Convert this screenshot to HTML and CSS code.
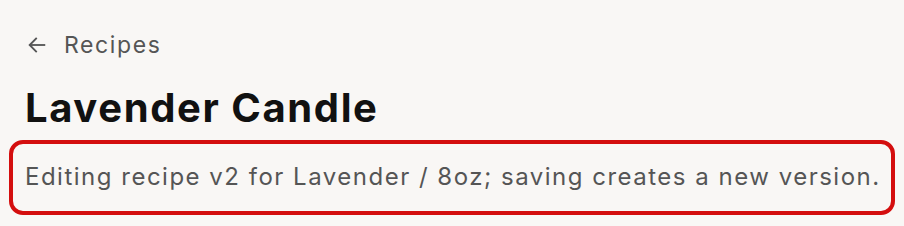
FILE: index.html
```html
<!DOCTYPE html>
<html lang="en">
<head>
<meta charset="utf-8">
<link rel="stylesheet" href="styles.css">
</head>
<body>
<main class="page">
  <a class="back" href="#">
    <svg class="back-icon" width="22" height="22" viewBox="0 0 24 24" fill="none" stroke="currentColor" stroke-width="2" stroke-linecap="square"><path d="M20 12H5"/><path d="M11 5l-7 7 7 7"/></svg>
    <span>Recipes</span>
  </a>
  <h1 class="title">Lavender Candle</h1>
  <p class="note">Editing recipe v2 for Lavender / 8oz; saving creates a new version.</p>
</main>
</body>
</html>
```
FILE: styles.css
```css
html, body { margin: 0; padding: 0; }
body {
  background: #f9f7f5;
  font-family: Inter, "Noto Sans", sans-serif;
  width: 904px;
  height: 226px;
  overflow: hidden;
}
.page {
  padding: 30px 9px 0 9px;
}
.back {
  display: flex;
  align-items: center;
  gap: 16px;
  margin-left: 17px;
  color: #555;
  text-decoration: none;
  font-size: 23px;
  letter-spacing: 1.6px;
  line-height: 30px;
}
.back-icon { display: block; }
.title {
  margin: 24px 0 0 16px;
  font-size: 40px;
  line-height: 48px;
  font-weight: 700;
  color: #111;
  letter-spacing: 1.6px;
}
.note {
  margin: 8px 0 0 0;
  border: 4px solid #d40e0e;
  border-radius: 14px;
  padding: 17px 12px 18px;
  font-size: 24px;
  line-height: 32px;
  letter-spacing: 1.5px;
  color: #555;
  white-space: nowrap;
}
```
